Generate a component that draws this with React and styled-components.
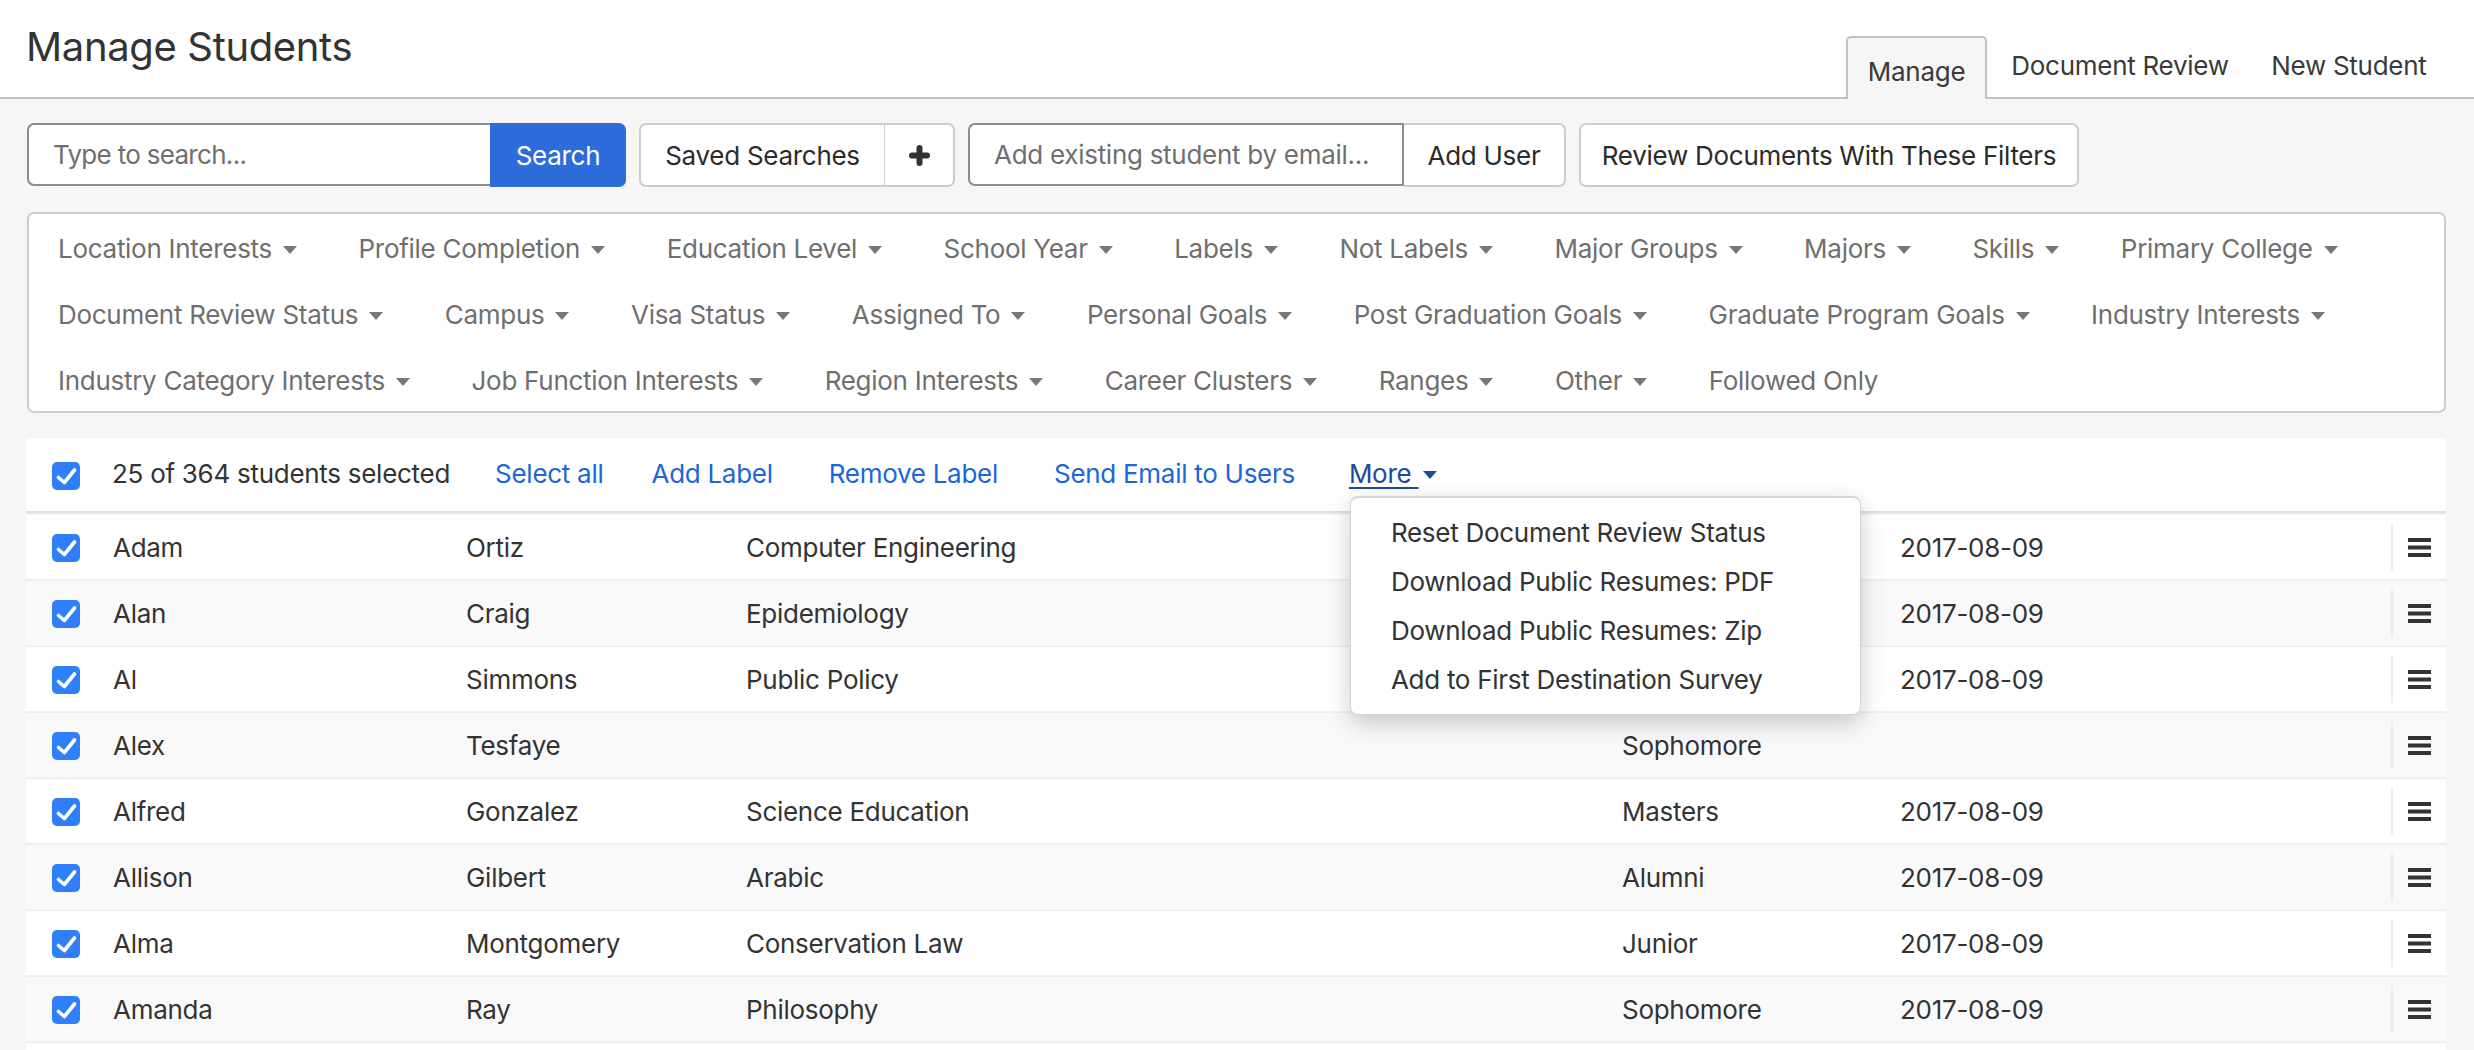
import React from 'react'
import styled, { createGlobalStyle } from 'styled-components'

const GlobalStyle = createGlobalStyle`
  html, body {
    margin: 0;
    height: 100%;
    overflow: hidden;
    background: #f6f6f6;
  }
  body {
    font-family: "Inter", "Liberation Sans", sans-serif;
    font-size: 26px;
    letter-spacing: -0.28px;
    color: #333;
  }
  * { box-sizing: border-box; }
`

const filterRows = [
  ['Location Interests', 'Profile Completion', 'Education Level', 'School Year', 'Labels', 'Not Labels', 'Major Groups', 'Majors', 'Skills', 'Primary College'],
  ['Document Review Status', 'Campus', 'Visa Status', 'Assigned To', 'Personal Goals', 'Post Graduation Goals', 'Graduate Program Goals', 'Industry Interests'],
  ['Industry Category Interests', 'Job Function Interests', 'Region Interests', 'Career Clusters', 'Ranges', 'Other'],
]

const students = [
  ['Adam', 'Ortiz', 'Computer Engineering', '', '2017-08-09'],
  ['Alan', 'Craig', 'Epidemiology', '', '2017-08-09'],
  ['Al', 'Simmons', 'Public Policy', '', '2017-08-09'],
  ['Alex', 'Tesfaye', '', 'Sophomore', ''],
  ['Alfred', 'Gonzalez', 'Science Education', 'Masters', '2017-08-09'],
  ['Allison', 'Gilbert', 'Arabic', 'Alumni', '2017-08-09'],
  ['Alma', 'Montgomery', 'Conservation Law', 'Junior', '2017-08-09'],
  ['Amanda', 'Ray', 'Philosophy', 'Sophomore', '2017-08-09'],
]

const moreActions = [
  'Reset Document Review Status',
  'Download Public Resumes: PDF',
  'Download Public Resumes: Zip',
  'Add to First Destination Survey',
]

const App = () => {
  return (
    <Page>
      <GlobalStyle />
      <Header>
        <Title>Manage Students</Title>
        <Tabs>
          <Tab $active>Manage</Tab>
          <Tab>Document Review</Tab>
          <Tab>New Student</Tab>
        </Tabs>
      </Header>
      <Content>
        <Toolbar>
          <Group>
            <TextInput $width={463} $noRight $tight placeholder="Type to search..." readOnly />
            <PrimaryButton>Search</PrimaryButton>
          </Group>
          <Group>
            <GroupButton $width={246} $first>Saved Searches</GroupButton>
            <GroupButton $width={70} $last>
              <svg width="21" height="21" viewBox="0 0 21 21" fill="none" stroke="#333" strokeWidth="6" strokeLinecap="round">
                <path d="M10.5 3v15M3 10.5h15" />
              </svg>
            </GroupButton>
          </Group>
          <Group>
            <TextInput $width={436} placeholder="Add existing student by email..." readOnly />
            <GroupButton $width={162} $last>Add User</GroupButton>
          </Group>
          <GroupButton $width={500} $first $last>Review Documents With These Filters</GroupButton>
        </Toolbar>

        <FilterBox>
          {filterRows.map((row, i) => (
            <FilterRow key={i}>
              {row.map((name) => (
                <FilterItem key={name}>
                  {name}
                  <Caret />
                </FilterItem>
              ))}
              {i === 2 && <FilterItem>Followed Only</FilterItem>}
            </FilterRow>
          ))}
        </FilterBox>

        <Table>
          <BulkBar>
            <Checkbox top={4} />
            <SelectedCount>25 of 364 students selected</SelectedCount>
            <BulkLink $gap={48}>Select all</BulkLink>
            <BulkLink>Add Label</BulkLink>
            <BulkLink>Remove Label</BulkLink>
            <BulkLink $gap={54}>Send Email to Users</BulkLink>
            <MoreWrap>
              <MoreLink>More </MoreLink>
              <Caret $color="#1d4a9c" $near />
              <Dropdown>
                {moreActions.map((action) => (
                  <DropdownItem key={action}>{action}</DropdownItem>
                ))}
              </Dropdown>
            </MoreWrap>
          </BulkBar>
          {students.map((s, i) => (
            <Row key={s[0]} $odd={i % 2 === 1}>
              <Checkbox top={2} />
              {s.map((cell, c) => (
                <Cell key={c}>{cell}</Cell>
              ))}
              <RowMenu>
                <MenuIcon />
              </RowMenu>
            </Row>
          ))}
        </Table>
      </Content>
    </Page>
  )
}

const Checkbox = ({ top }) => (
  <CheckBoxBox $top={top}>
    <svg width="28" height="28" viewBox="0 0 28 28" fill="none" stroke="#fff" strokeWidth="3.6" strokeLinecap="round" strokeLinejoin="round">
      <path d="M6.5 15.5l5.8 5L22.5 8" />
    </svg>
  </CheckBoxBox>
)

const MenuIcon = () => (
  <svg width="23" height="19" viewBox="0 0 23 19" fill="#333">
    <rect width="23" height="4" />
    <rect y="7.5" width="23" height="4" />
    <rect y="15" width="23" height="4" />
  </svg>
)

export default App

const Page = styled.div`
  height: 1050px;
  overflow: hidden;
`

const Header = styled.div`
  height: 99px;
  padding: 0 29px 0 26px;
  display: flex;
  justify-content: space-between;
  align-items: flex-end;
  background: #fff;
  border-bottom: 2px solid #b9c3cf;
`

const Title = styled.h1`
  margin: 0;
  align-self: flex-start;
  padding-top: 23px;
  font-size: 40px;
  line-height: 48px;
  font-weight: 400;
  letter-spacing: -0.35px;
  color: #333;
`

const Tabs = styled.div`
  display: flex;
  margin-bottom: -2px;
`

const Tab = styled.div`
  height: 63px;
  padding: ${(p) => (p.$active ? '6px 20px 0' : '0 16.5px 6px 22px')};
  display: flex;
  align-items: center;
  color: #3a3a3a;
  border-radius: 5px 5px 0 0;
  border: 2px solid ${(p) => (p.$active ? '#b9c3cf' : 'transparent')};
  border-bottom: 0;
  background: ${(p) => (p.$active ? '#f6f6f6' : 'transparent')};
`

const Content = styled.div`
  padding: 24px 28px 0 26px;
`

const Toolbar = styled.div`
  display: flex;
  gap: 13px;
  padding-left: 1px;
`

const Group = styled.div`
  display: flex;
  height: 64px;
`

const TextInput = styled.input`
  width: ${(p) => p.$width}px;
  height: 63px;
  padding: 0 24px;
  font: inherit;
  letter-spacing: ${(p) => (p.$tight ? '-0.7px' : 'inherit')};
  color: #333;
  background: #fff;
  border: 2px solid #8c8c8c;
  border-right-width: ${(p) => (p.$noRight ? '0' : '2px')};
  border-radius: 7px 0 0 7px;
  outline: none;
  &::placeholder {
    color: #6f6f6f;
    opacity: 1;
  }
`

const PrimaryButton = styled.div`
  width: 136px;
  height: 64px;
  display: flex;
  align-items: center;
  justify-content: center;
  color: #fff;
  background: #2d6cdb;
  border-radius: 0 7px 7px 0;
`

const GroupButton = styled.div`
  width: ${(p) => p.$width}px;
  height: 64px;
  display: flex;
  align-items: center;
  justify-content: center;
  background: #fff;
  color: #2b2b2b;
  border: 2px solid #cdcdcd;
  border-left-width: ${(p) => (p.$first ? '2px' : '0')};
  border-right-width: ${(p) => (p.$last ? '2px' : '1px')};
  border-radius: ${(p) => (p.$first ? '7px' : '0')} ${(p) => (p.$last ? '7px 7px' : '0 0')} ${(p) => (p.$first ? '7px' : '0')};
`

const FilterBox = styled.div`
  margin: 25px 0 25px 1px;
  height: 201px;
  padding: 1px 29px;
  background: #fff;
  border: 2px solid #cdcdcd;
  border-radius: 7px;
`

const FilterRow = styled.div`
  height: 66px;
  display: flex;
  align-items: center;
  gap: 61.5px;
`

const FilterItem = styled.div`
  display: flex;
  align-items: center;
  color: #6f6f6f;
  white-space: nowrap;
`

const Caret = styled.span`
  width: 0;
  height: 0;
  margin-left: ${(p) => (p.$near ? '5px' : '11px')};
  margin-top: 3px;
  border-left: 7px solid transparent;
  border-right: 7px solid transparent;
  border-top: 8px solid ${(p) => p.$color || '#777'};
`

const Table = styled.div`
  min-height: 640px;
  background: #fff;
`

const BulkBar = styled.div`
  height: 75px;
  margin-bottom: 2px;
  padding: 0 26px 2px;
  display: flex;
  align-items: center;
  background: #fff;
  border-bottom: 2px solid #e0e0e0;
  box-shadow: 0 2px 0 #f1f1f1;
`

const SelectedCount = styled.div`
  margin-left: 32px;
  margin-right: 45px;
  white-space: nowrap;
`

const BulkLink = styled.div`
  margin-right: ${(p) => p.$gap || 56}px;
  color: #1a66db;
  white-space: nowrap;
`

const MoreWrap = styled.div`
  position: relative;
  display: flex;
  align-items: center;
`

const MoreLink = styled.div`
  color: #1d4a9c;
  white-space: pre;
  text-decoration: underline;
  text-decoration-thickness: 2px;
  text-underline-offset: 4px;
`

const Dropdown = styled.div`
  position: absolute;
  top: 38px;
  left: 1px;
  z-index: 5;
  width: 511px;
  height: 219px;
  padding: 10px 0;
  background: #fff;
  border: 1px solid #d5d5d5;
  border-top-width: 2px;
  border-radius: 8px;
  box-shadow: 0 8px 24px rgba(0, 0, 0, 0.2);
`

const DropdownItem = styled.div`
  height: 49px;
  padding-left: 40px;
  display: flex;
  align-items: center;
  white-space: nowrap;
`

const Row = styled.div`
  height: 66px;
  padding-left: 26px;
  display: grid;
  grid-template-columns: 28px 386px 280px 876px 278px 491px 55px;
  align-items: center;
  background: ${(p) => (p.$odd ? '#f9f9f9' : '#fff')};
  border-bottom: 2px solid #efefef;
`

const Cell = styled.div`
  white-space: nowrap;
  &:nth-child(2) {
    padding-left: 33px;
  }
`

const RowMenu = styled.div`
  height: 48px;
  display: flex;
  align-items: center;
  padding-left: 15px;
  border-left: 2px solid #ececec;
`

const CheckBoxBox = styled.div`
  width: 28px;
  height: 28px;
  margin-top: ${(p) => p.$top}px;
  background: #2f7ffa;
  border-radius: 5px;
`
